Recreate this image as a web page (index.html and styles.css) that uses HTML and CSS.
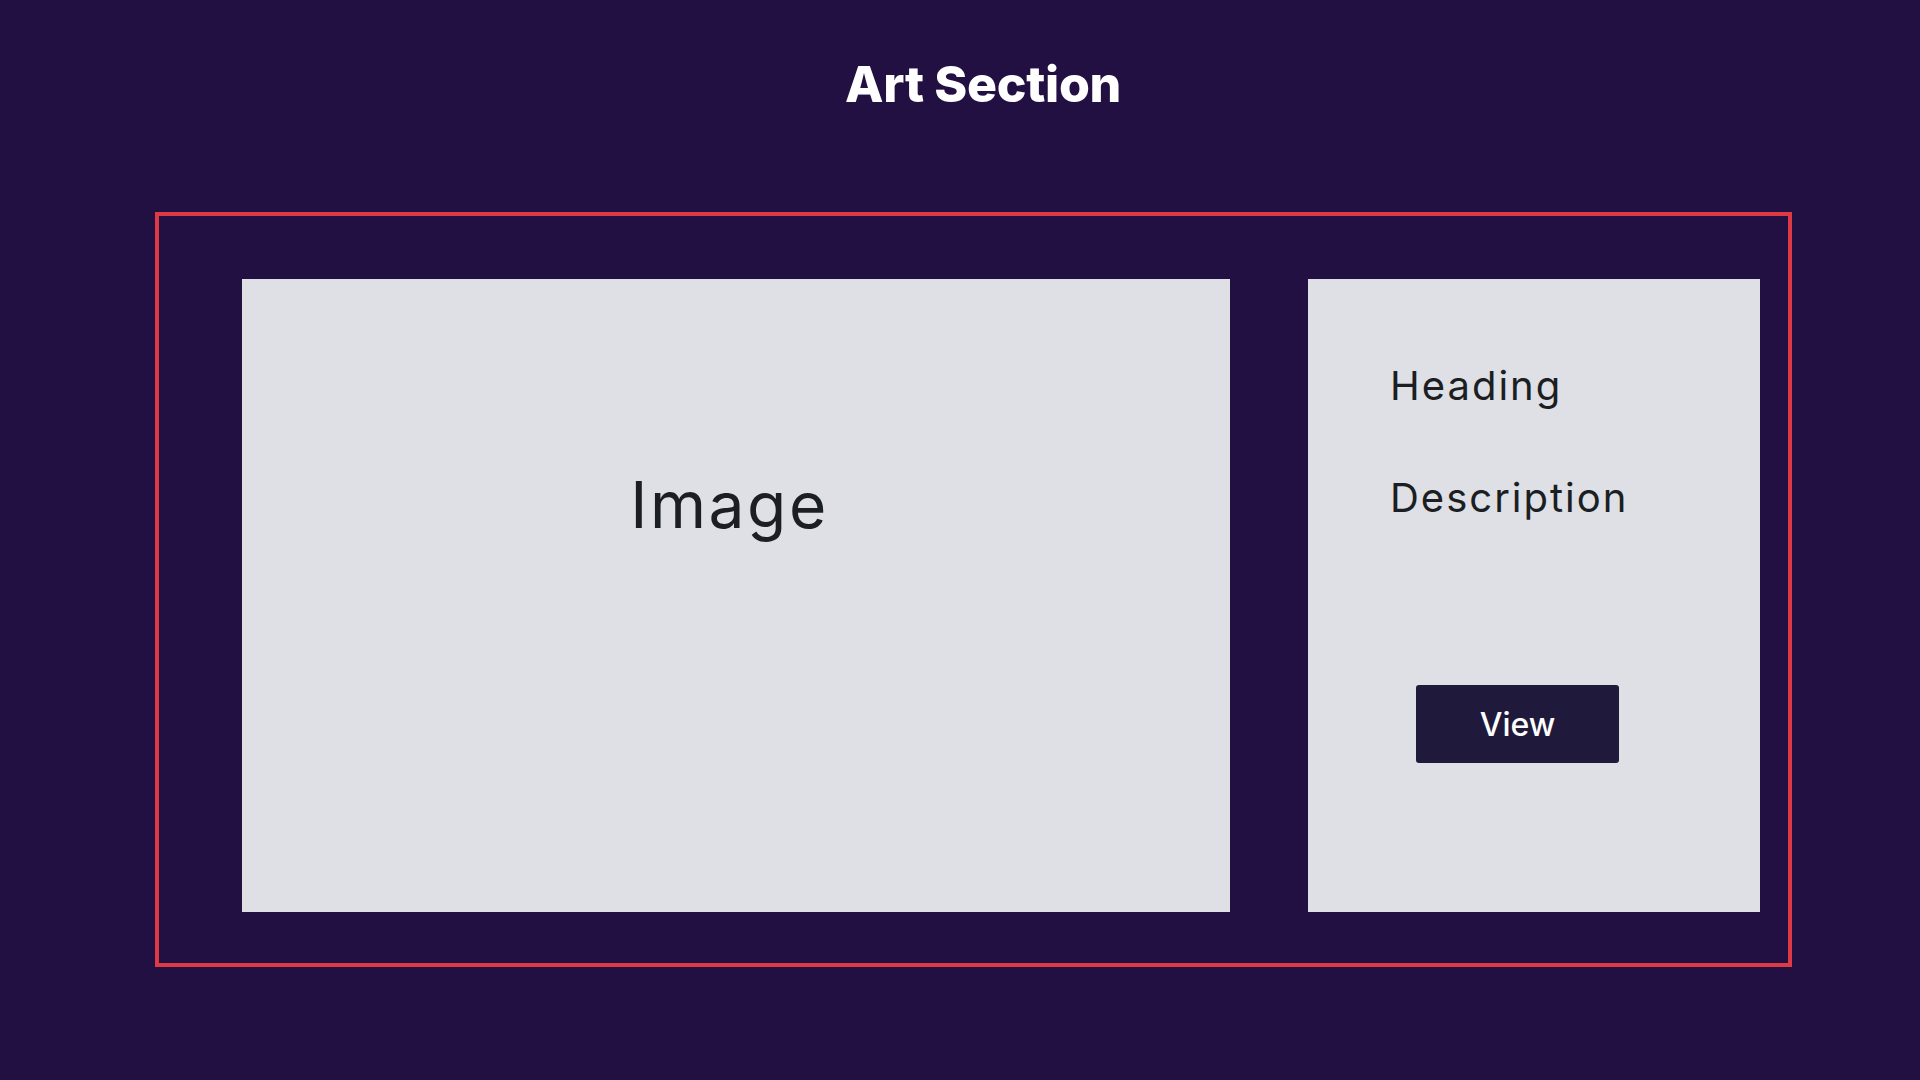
FILE: index.html
```html
<!DOCTYPE html>
<html lang="en">
<head>
<meta charset="utf-8">
<title>Art Section</title>
<link rel="stylesheet" href="styles.css">
</head>
<body>
  <header class="page-header">
    <h1 class="page-title">Art Section</h1>
  </header>
  <section class="art-frame">
    <div class="art-image">
      <span class="art-image-label">Image</span>
    </div>
    <div class="art-info">
      <h2 class="art-heading">Heading</h2>
      <p class="art-description">Description</p>
      <button class="art-button" type="button">View</button>
    </div>
  </section>
</body>
</html>
```
FILE: styles.css
```css
html, body {
  margin: 0;
  padding: 0;
}
body {
  background: #231043;
  font-family: Inter, "Noto Sans", sans-serif;
  min-height: 1080px;
}
.page-header {
  padding-top: 59px;
  padding-left: 46px;
  text-align: center;
}
.page-title {
  margin: 0;
  font-size: 50px;
  line-height: 50px;
  font-weight: 800;
  color: #ffffff;
  letter-spacing: -0.3px;
}
.art-frame {
  box-sizing: border-box;
  margin: 103px 0 0 155px;
  width: 1637px;
  height: 755px;
  border: 4px solid #de3a45;
  padding: 63px 28px 51px 83px;
  display: flex;
  gap: 78px;
}
.art-image {
  box-sizing: border-box;
  width: 988px;
  height: 633px;
  background: #dee0e5;
  display: flex;
  justify-content: center;
  padding-top: 194px;
  padding-right: 13px;
}
.art-image-label {
  font-size: 64px;
  line-height: 64px;
  color: #1b1e22;
  height: 64px;
  letter-spacing: 0.04em;
}
.art-info {
  box-sizing: border-box;
  width: 452px;
  height: 633px;
  background: #dee0e5;
  padding: 87px 0 0 82px;
  display: flex;
  flex-direction: column;
  align-items: flex-start;
}
.art-heading,
.art-description {
  margin: 0;
  font-size: 40px;
  line-height: 40px;
  font-weight: 400;
  color: #1b1e22;
  letter-spacing: 0.05em;
}
.art-description {
  margin-top: 72px;
}
.art-button {
  margin-top: 167px;
  margin-left: 26px;
  width: 203px;
  height: 78px;
  border: none;
  border-radius: 3px;
  background: #1f1a3b;
  color: #ffffff;
  font-family: Inter, "Noto Sans", sans-serif;
  font-size: 32px;
  font-weight: 500;
  padding: 0;
  display: flex;
  align-items: center;
  justify-content: center;
}
```
